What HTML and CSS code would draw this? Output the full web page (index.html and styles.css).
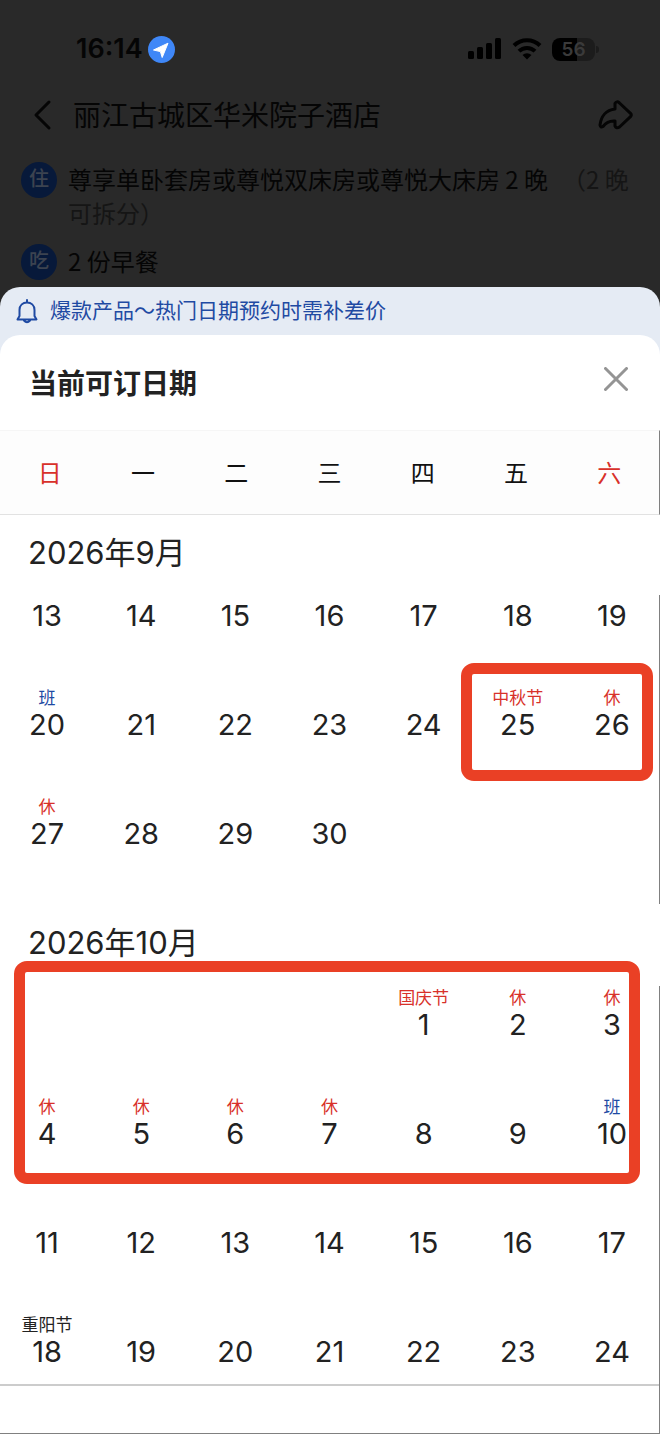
FILE: index.html
```
<!DOCTYPE html>
<html lang="zh-CN">
<head>
<meta charset="utf-8">
<meta name="viewport" content="width=device-width, initial-scale=1">
<title>当前可订日期</title>
<link rel="stylesheet" href="styles.css">
</head>
<body>
<div class="backdrop">
  <div class="status">
    <time class="clock">16:14</time>
    <svg class="location" viewBox="0 0 27 27" aria-hidden="true"><circle cx="13.500" cy="13.500" r="13.500" fill="#3f87f7"/><path d="M20 7.200 14.200 21.500 12.400 15.600 5.500 14Z" fill="#fff" stroke="#fff" stroke-width="1" stroke-linejoin="round"/></svg>
    <svg class="signal" viewBox="0 0 34 22" aria-hidden="true"><rect x="0" y="13" width="6" height="8" rx="1.500"/><rect x="9" y="9" width="6" height="12" rx="1.500"/><rect x="18" y="5" width="6" height="16" rx="1.500"/><rect x="27" y="0" width="6" height="21" rx="1.500"/></svg>
    <svg class="wifi" viewBox="0 0 30 22" aria-hidden="true"><g fill="none" stroke="#000" stroke-width="4"><path d="M2 7.500a18.500 18.500 0 0 1 26 0"/><path d="M7 13.200a11.300 11.300 0 0 1 16 0"/></g><path d="M10.500 17a6.500 6.500 0 0 1 9 0L15 21.500Z"/></svg>
    <div class="battery"><span class="battery-level">56</span></div>
  </div>
  <div class="titlebar">
    <button class="icon-button" aria-label="返回"><svg class="back" viewBox="0 0 20 32"><path d="M17 3 4 16 17 29"/></svg></button>
    <h1 class="hotel">丽江古城区华米院子酒店</h1>
    <button class="icon-button" aria-label="分享"><svg class="share" viewBox="0 0 36 32"><path d="M17 4.500Q18.500 1.500 21.500 4L32.500 14.300Q34 16 32.500 17.700L21.500 28Q18.500 30 17 27V22C11 21.500 8 23.500 5 27.500Q2.500 29 2 26C3 17.500 8 11 17 10Z"/></svg></button>
  </div>
  <ul class="benefits">
    <li class="benefit"><span class="badge">住</span><p class="benefit-text">尊享单卧套房或尊悦双床房或尊悦大床房 2 晚<span class="note">（2 晚可拆分）</span></p></li>
    <li class="benefit"><span class="badge">吃</span><p class="benefit-text">2 份早餐</p></li>
  </ul>
</div>
<main class="sheet">
  <div class="notice">
    <svg class="bell" viewBox="0 0 24 26" aria-hidden="true"><path d="M12 2V4M4.500 18V12C4.500 7 8 4.500 12 4.500S19.500 7 19.500 12V18L21.500 21.500H2.500ZM9 22.500Q12 26 15 22.500"/></svg>
    <p class="notice-text">爆款产品～热门日期预约时需补差价</p>
  </div>
  <section class="panel">
    <header class="panel-head">
      <h2 class="panel-title">当前可订日期</h2>
      <button class="icon-button" aria-label="关闭"><svg class="close" viewBox="0 0 24 24"><path d="M1.500 1.500 22.500 22.500M22.500 1.500 1.500 22.500"/></svg></button>
    </header>
    <div class="weekdays"><span class="holiday">日</span><span>一</span><span>二</span><span>三</span><span>四</span><span>五</span><span class="holiday">六</span></div>
    <section class="month">
      <h3 class="month-title pinned">2026年9月</h3>
      <div class="weeks">
        <table class="days">
          <tr><td><i></i>13</td><td><i></i>14</td><td><i></i>15</td><td><i></i>16</td><td><i></i>17</td><td><i></i>18</td><td><i></i>19</td></tr>
          <tr><td><i class="workday">班</i>20</td><td><i></i>21</td><td><i></i>22</td><td><i></i>23</td><td><i></i>24</td><td><i class="holiday">中秋节</i>25</td><td><i class="holiday">休</i>26</td></tr>
          <tr><td><i class="holiday">休</i>27</td><td><i></i>28</td><td><i></i>29</td><td><i></i>30</td><td></td><td></td><td></td></tr>
        </table>
        <div class="mark mark-autumn"></div>
      </div>
    </section>
    <section class="month">
      <h3 class="month-title">2026年10月</h3>
      <div class="weeks">
        <table class="days">
          <tr><td></td><td></td><td></td><td></td><td><i class="holiday">国庆节</i>1</td><td><i class="holiday">休</i>2</td><td><i class="holiday">休</i>3</td></tr>
          <tr><td><i class="holiday">休</i>4</td><td><i class="holiday">休</i>5</td><td><i class="holiday">休</i>6</td><td><i class="holiday">休</i>7</td><td><i></i>8</td><td><i></i>9</td><td><i class="workday">班</i>10</td></tr>
          <tr><td><i></i>11</td><td><i></i>12</td><td><i></i>13</td><td><i></i>14</td><td><i></i>15</td><td><i></i>16</td><td><i></i>17</td></tr>
          <tr class="last"><td><i>重阳节</i>18</td><td><i></i>19</td><td><i></i>20</td><td><i></i>21</td><td><i></i>22</td><td><i></i>23</td><td><i></i>24</td></tr>
        </table>
        <div class="mark mark-national"></div>
      </div>
    </section>
    <footer class="foot"></footer>
  </section>
</main>
</body>
</html>
```
FILE: styles.css
```
* { box-sizing: border-box; margin: 0; padding: 0; }
body {
  background: #292929;
  color: #222;
  font-family: Inter, "Noto Sans CJK SC", sans-serif;
}
.icon-button { display: flex; background: none; border: 0; cursor: pointer; }
svg { display: block; flex: none; }

.backdrop { color: #050505; padding: 32px 0 8px; }
.status { display: flex; align-items: center; height: 34px; padding: 0 65px 0 76px; }
.clock { font-size: 27px; font-weight: 600; line-height: 34px; }
.location { width: 27px; height: 27px; margin-left: 5px; }
.signal { width: 34px; height: 22px; margin-left: auto; }
.wifi { width: 30px; height: 22px; margin-left: 10px; }
.battery {
  position: relative;
  width: 43px;
  height: 23px;
  margin-left: 10px;
  border-radius: 8px;
  background: linear-gradient(90deg, #000 57%, #1c1c1c 57%);
  color: #3a3a3a;
  font-size: 19px;
  font-weight: 600;
  line-height: 23px;
  text-align: center;
}
.battery::after {
  content: "";
  position: absolute;
  left: 100%;
  top: 8px;
  width: 3px;
  height: 7px;
  margin-left: 1px;
  border-radius: 0 3px 3px 0;
  background: #1c1c1c;
}
.titlebar { display: flex; align-items: center; margin-top: 29px; padding: 0 26px 0 32px; }
.back { width: 20px; height: 32px; fill: none; stroke: #050505; stroke-width: 3; stroke-linecap: round; stroke-linejoin: round; }
.share { width: 36px; height: 32px; fill: none; stroke: #050505; stroke-width: 3; stroke-linejoin: round; }
.hotel { flex: 1; margin-left: 21px; padding-top: 2px; font-size: 28px; font-weight: 400; line-height: 38px; }
.benefits { display: flex; flex-direction: column; gap: 14px; margin-top: 27px; padding: 0 20px 0 21px; list-style: none; }
.benefit { display: flex; gap: 11px; }
.badge {
  flex: none;
  width: 36px;
  height: 36px;
  border-radius: 50%;
  background: #07193a;
  color: #3c4350;
  font-size: 20px;
  font-weight: 500;
  line-height: 34px;
  text-align: center;
}
.benefit-text { font-family: "Noto Sans CJK SC", sans-serif; font-size: 24px; line-height: 34px; }
.benefit:last-child { height: 35px; }
.note { margin-left: 14px; color: #151515; }

.sheet { border-radius: 20px 20px 0 0; background: #e5ebf4; overflow: hidden; }
.notice { display: flex; align-items: center; gap: 11px; height: 48px; padding: 0 15px; color: #1f4aa3; }
.bell { width: 24px; height: 26px; fill: none; stroke: #1f4aa3; stroke-width: 2; stroke-linecap: round; stroke-linejoin: round; }
.notice-text { font-size: 21px; line-height: 30px; }
.panel { border-radius: 20px 20px 0 0; background: #fff; }
.panel-head { display: flex; align-items: center; justify-content: space-between; height: 95px; padding: 0 32px 8px 29px; }
.panel-title { padding-top: 10px; font-size: 28px; font-weight: 700; line-height: 40px; }
.close { width: 24px; height: 24px; fill: none; stroke: #949494; stroke-width: 3; stroke-linecap: round; }
.weekdays {
  display: grid;
  grid-template-columns: repeat(7, 1fr);
  height: 85px;
  padding: 0 3px;
  border-top: 1px solid #f6f6f6;
  border-right: 1px solid #808080;
  border-bottom: 1px solid #e2e2e2;
  background: #fdfdfd;
  color: #111;
  font-size: 24px;
  line-height: 85px;
  text-align: center;
}
.weekdays .holiday, .holiday { color: #d8312a; }
.workday { color: #1f4aa3; }
.month-title { padding: 19px 28px 23px; font-size: 31px; font-weight: 400; line-height: 40px; }
.pinned { position: relative; z-index: 1; margin-bottom: -18px; padding: 18px 28px 22px; background: #fff; }
.weeks { position: relative; border-right: 1px solid #808080; }
.days { width: 100%; table-layout: fixed; border-collapse: collapse; font-size: 29px; line-height: 30px; text-align: center; }
.days td { padding-bottom: 55px; vertical-align: top; }
.days .last td { padding-bottom: 17px; }
.days i { display: block; height: 24px; font-size: 17px; font-style: normal; line-height: 24px; }
.mark { position: absolute; border: 11px solid #ea4025; border-radius: 13px; }
.mark-autumn { top: 86px; right: 6px; left: 70%; height: 118px; }
.mark-national { top: -25px; right: 19px; left: 14px; height: 223px; }
.foot { height: 50px; border: solid #808080; border-width: 0 1px 1px 0; box-shadow: inset 0 2px #ccc; }
```
